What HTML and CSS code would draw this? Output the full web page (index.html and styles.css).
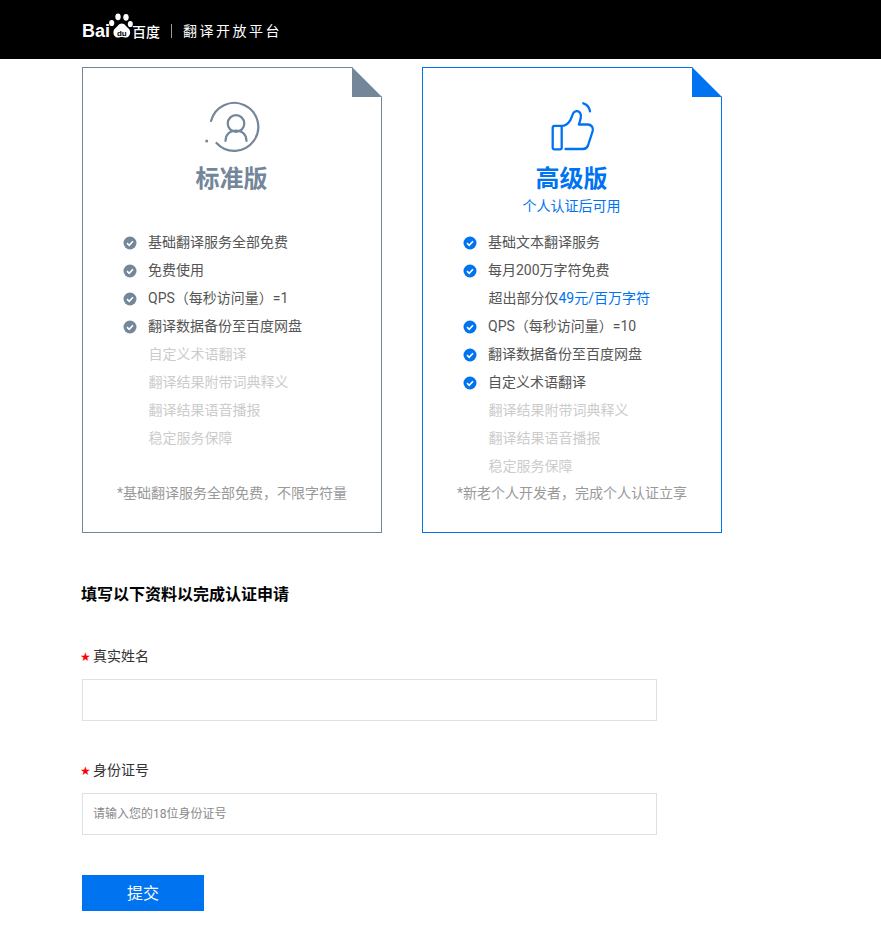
FILE: index.html
```html
<!DOCTYPE html>
<html lang="zh-CN">
<head>
    <meta charset="UTF-8">
    <meta name="viewport" content="width=device-width, initial-scale=1.0">
    <title>百度翻译开放平台</title>
    <link rel="stylesheet" href="styles.css">
</head>
<body>
    <svg class="defs" width="0" height="0">
        <symbol id="check" viewBox="0 0 14 14">
            <circle cx="7" cy="7" r="6.5" fill="currentColor"/>
            <path d="M4 7.2l2.2 2.1L10 5.3" fill="none" stroke="#fff" stroke-width="1.6"/>
        </symbol>
    </svg>

    <header class="topbar">
        <div class="logo">
            <span class="logo-bai">Bai</span>
            <svg class="logo-paw" viewBox="0 0 26 26" width="26" height="26">
                <ellipse cx="3.7" cy="10" rx="2.6" ry="3.100" fill="#fff"/>
                <ellipse cx="10" cy="3.800" rx="2.700" ry="3.400" fill="#fff"/>
                <ellipse cx="18" cy="4.300" rx="2.700" ry="3.400" fill="#fff"/>
                <ellipse cx="22.300" cy="11" rx="2.500" ry="3.100" fill="#fff"/>
                <path d="M13.800 10.500c3.200 0 4 3 6.500 4.800c3 2.200 2.500 9.200-2.400 9.200c-1.800 0-2.700-.6-4.100-.6s-2.300.6-4.100.6c-4.900 0-5.400-7-2.400-9.200c2.500-1.800 3.300-4.800 6.500-4.800z" fill="#fff"/>
                <text class="logo-du" x="13.800" y="22.500">du</text>
            </svg>
            <span class="logo-cn">百度</span>
        </div>
        <span class="topbar-sep"></span>
        <span class="topbar-title">翻译开放平台</span>
    </header>

    <main class="content">
        <section class="plans">
            <div class="plan plan-basic">
                <svg class="plan-corner" viewBox="0 0 30 30" width="30" height="30">
                    <path d="M0 0h30v30z" fill="#fff"/>
                    <path d="M0 0l30 30H0z" fill="currentColor"/>
                </svg>
                <svg class="plan-icon" viewBox="200 95 65 60" width="65" height="60" fill="none" stroke="currentColor" stroke-width="2.200">
                    <path d="M211 121A24 24 0 1 1 216.500 143" stroke-linecap="round"/>
                    <circle cx="206.700" cy="141" r="1.500" fill="currentColor" stroke="none"/>
                    <circle cx="236" cy="123.500" r="8.300"/>
                    <path d="M225.500 141c0-6.500 4.500-10.500 10.500-10.500s10.500 4 10.500 10.500" stroke-linecap="round"/>
                </svg>
                <h2 class="plan-name">标准版</h2>
                <ul class="plan-list">
                    <li><svg class="tick"><use href="#check"/></svg>基础翻译服务全部免费</li>
                    <li><svg class="tick"><use href="#check"/></svg>免费使用</li>
                    <li><svg class="tick"><use href="#check"/></svg>QPS（每秒访问量）=1</li>
                    <li><svg class="tick"><use href="#check"/></svg>翻译数据备份至百度网盘</li>
                    <li class="off">自定义术语翻译</li>
                    <li class="off">翻译结果附带词典释义</li>
                    <li class="off">翻译结果语音播报</li>
                    <li class="off">稳定服务保障</li>
                </ul>
                <p class="plan-note">*基础翻译服务全部免费，不限字符量</p>
            </div>

            <div class="plan plan-pro">
                <svg class="plan-corner" viewBox="0 0 30 30" width="30" height="30">
                    <path d="M0 0h30v30z" fill="#fff"/>
                    <path d="M0 0l30 30H0z" fill="currentColor"/>
                </svg>
                <svg class="plan-icon" viewBox="540 95 65 60" width="65" height="60" fill="none" stroke="currentColor" stroke-width="2.300" stroke-linecap="round" stroke-linejoin="round">
                    <path d="M561.700 126v21.800a1.500 1.500 0 0 1-1.500 1.500h-6a1.500 1.500 0 0 1-1.500-1.500v-20a2 2 0 0 1 2-2h7c3.500 0 6.500-2.300 8.500-5.500c1.500-2.500 2-5 3-7c1.800-3.500 6.500-2.500 7.500 1c.8 3-.5 6-1.800 10.200h8.800c3.700 0 6 3.200 5 6.500l-4.700 14.500c-.8 2.200-2.500 3.500-5 3.500h-17.500"/>
                    <path d="M583.300 103.300c3.500 1 6 4 6.700 8"/>
                </svg>
                <h2 class="plan-name">高级版</h2>
                <p class="plan-sub">个人认证后可用</p>
                <ul class="plan-list">
                    <li><svg class="tick"><use href="#check"/></svg>基础文本翻译服务</li>
                    <li><svg class="tick"><use href="#check"/></svg>每月200万字符免费</li>
                    <li class="extra">超出部分仅<em>49元/百万字符</em></li>
                    <li><svg class="tick"><use href="#check"/></svg>QPS（每秒访问量）=10</li>
                    <li><svg class="tick"><use href="#check"/></svg>翻译数据备份至百度网盘</li>
                    <li><svg class="tick"><use href="#check"/></svg>自定义术语翻译</li>
                    <li class="off">翻译结果附带词典释义</li>
                    <li class="off">翻译结果语音播报</li>
                    <li class="off">稳定服务保障</li>
                </ul>
                <p class="plan-note">*新老个人开发者，完成个人认证立享</p>
            </div>
        </section>

        <form class="apply">
            <h3 class="apply-title">填写以下资料以完成认证申请</h3>
            <div class="field">
                <label class="field-label" for="realName"><span class="star">★</span>真实姓名</label>
                <input id="realName" type="text">
            </div>
            <div class="field">
                <label class="field-label" for="idNumber"><span class="star">★</span>身份证号</label>
                <input id="idNumber" type="text" placeholder="请输入您的18位身份证号">
            </div>
            <button class="submit" type="button">提交</button>
        </form>
    </main>
</body>
</html>
```

FILE: styles.css
```css
:root {
    --grey: #73869a;
    --blue: #0073f0;
    --text: #555;
    --muted: #ccc;
}
* {
    box-sizing: border-box;
}
body {
    margin: 0;
    font-family: Roboto, "Noto Sans CJK SC", sans-serif;
    font-size: 14px;
    color: var(--text);
    background: #fff;
}
.defs {
    position: absolute;
}
.topbar {
    height: 59px;
    background: #000;
    color: #fff;
    display: flex;
    align-items: center;
    padding-left: 82px;
}
.logo {
    display: flex;
    align-items: center;
    width: 80px;
}
.logo-bai {
    font-family: "Liberation Sans", sans-serif;
    font-weight: bold;
    font-size: 18px;
    line-height: 20px;
    margin-top: 2px;
}
.logo-paw {
    margin: -7px -2px 0 -2px;
    flex: none;
}
.logo-du {
    font-family: "Liberation Sans", sans-serif;
    font-size: 8px;
    font-weight: bold;
    fill: #000;
    text-anchor: middle;
}
.logo-cn {
    font-family: "Noto Sans CJK SC", sans-serif;
    font-size: 14px;
    font-weight: 500;
    line-height: 20px;
    margin-top: 2px;
    white-space: nowrap;
}
.topbar-sep {
    width: 1px;
    height: 14px;
    background: #999;
    margin: 3px 11px 0 9px;
}
.topbar-title {
    font-size: 14px;
    letter-spacing: 2.500px;
    margin-top: 1px;
}
.content {
    padding: 8px 0 33px 82px;
}
.plans {
    display: flex;
    gap: 40px;
}
.plan {
    position: relative;
    width: 300px;
    height: 466px;
    border: 1px solid currentColor;
    padding-top: 27px;
    display: flex;
    flex-direction: column;
}
.plan-basic {
    color: var(--grey);
}
.plan-pro {
    color: var(--blue);
}
.plan-corner {
    position: absolute;
    top: -1px;
    right: -1px;
}
.plan-icon {
    display: block;
    margin: 0 auto;
    flex: none;
}
.plan-name {
    margin: 8px 0 0;
    padding-right: 1px;
    height: 32px;
    line-height: 32px;
    font-size: 24px;
    font-weight: 700;
    text-align: center;
    flex: none;
}
.plan-sub {
    margin: -1px 0 0;
    padding-right: 1px;
    height: 24px;
    line-height: 24px;
    text-align: center;
    font-size: 14px;
    flex: none;
}
.plan-list {
    list-style: none;
    margin: 0;
    padding: 33px 0 0 40px;
    color: var(--text);
}
.plan-pro .plan-list {
    padding-top: 10px;
}
.plan-list li {
    height: 28px;
    line-height: 28px;
    display: flex;
    align-items: center;
    white-space: pre;
}
.plan-list .off {
    color: var(--muted);
    padding-left: 25.500px;
}
.plan-list .extra {
    padding-left: 25.500px;
}
.plan-list em {
    font-style: normal;
    color: var(--blue);
}
.tick {
    width: 14px;
    height: 14px;
    margin: 2px 11.500px 0 -.5px;
    flex: none;
}
.plan-basic .tick {
    color: var(--grey);
}
.plan-pro .tick {
    color: var(--blue);
}
.plan-note {
    margin: auto 0 0;
    height: 20px;
    line-height: 20px;
    margin-bottom: 29px;
    text-align: center;
    color: #999;
}
.apply {
    padding-top: 50px;
}
.apply-title {
    margin: 0 0 38px -1px;
    font-size: 16px;
    line-height: 24px;
    font-weight: 700;
    color: #000;
}
.field {
    margin-bottom: 38px;
}
.field:last-of-type {
    margin-bottom: 40px;
}
.field-label {
    display: flex;
    align-items: center;
    height: 20px;
    margin-bottom: 14px;
    color: #333;
}
.star {
    color: #f00;
    font-size: 12px;
    width: 12px;
    margin-left: -2px;
    margin-right: 1px;
    font-family: "DejaVu Sans", sans-serif;
    position: relative;
    top: 2px;
}
.field input {
    display: block;
    width: 575px;
    height: 42px;
    border: 1px solid #e0e0e0;
    padding: 0 10px;
    font: 12px Roboto, "Noto Sans CJK SC", sans-serif;
    color: #333;
    outline: none;
}
.field input::placeholder {
    color: #888;
}
.submit {
    display: block;
    width: 122px;
    height: 36px;
    border: 0;
    padding: 0 0 2px;
    background: var(--blue);
    color: #fff;
    font: 16px Roboto, "Noto Sans CJK SC", sans-serif;
    cursor: pointer;
}
```
